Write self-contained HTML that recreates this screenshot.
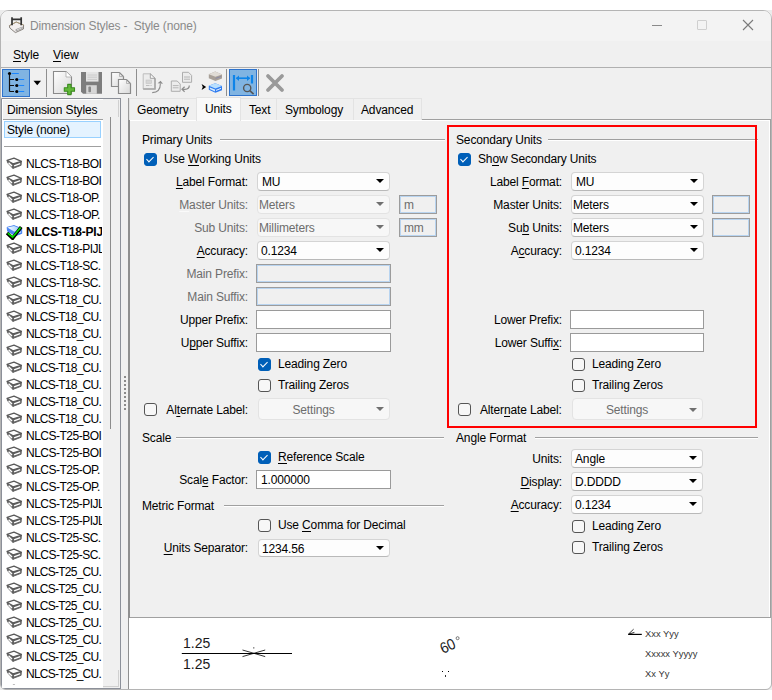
<!DOCTYPE html>
<html><head><meta charset="utf-8">
<style>
*{box-sizing:border-box;margin:0;padding:0}
html,body{width:772px;height:700px;overflow:hidden;background:#fff}
body{position:relative;font:12px "Liberation Sans",sans-serif;color:#000}
.a{position:absolute}
.t{position:absolute;font-size:12px;line-height:14px;white-space:nowrap;letter-spacing:-0.15px}
.r{transform:translateX(-100%)}
.g{color:#6d6d6d}
u{text-decoration:none;border-bottom:1px solid currentColor;display:inline-block;line-height:12px}
.win{position:absolute;left:0;top:10px;width:772px;height:680px;background:#f0f0f0;border:1px solid #b4b4b4;border-radius:9px 9px 6px 6px;overflow:hidden}
.cb{position:absolute;width:133px;height:19px;background:#fdfdfd;border:1px solid #d4d4d4;border-bottom-color:#b9b9b9;border-radius:4px}
.cb.d{background:#f7f7f7;border-color:#e3e3e3}
.cb i{position:absolute;right:5px;top:6px;width:0;height:0;border-left:4px solid transparent;border-right:4px solid transparent;border-top:4px solid #000}
.cb.d i{border-top-color:#707070}
.cb span{position:absolute;left:3px;top:2px;line-height:14px;white-space:nowrap;letter-spacing:-0.15px}
.ed{position:absolute;width:135px;height:19px;background:#fff;border:1px solid #9a9a9a}
.ed.d{background:#f0f0f0;border:1px solid #9c9c9c;box-shadow:inset 0 0 0 1px #b8d4f0}
.sm{position:absolute;width:38px;height:19px;background:#f0f0f0;border:1px solid #9c9c9c;box-shadow:inset 0 0 0 1px #b8d4f0}
.ck{position:absolute;width:13px;height:13px;border:1px solid #555;border-radius:3px;background:#f7f7f7}
.ck.on{background:#005fb8;border-color:#005fb8}
.ck.on:after{content:"";position:absolute;left:3px;top:1px;width:3px;height:6px;border-right:1.3px solid #fff;border-bottom:1.3px solid #fff;transform:rotate(45deg)}
.gl{position:absolute;height:2px;border-top:1px solid #a0a0a0;border-bottom:1px solid #fff}
.li{position:absolute;left:7px;height:17px;width:100px}
.li svg{position:absolute;left:0;top:2px}
.li span{position:absolute;left:19px;top:1px;line-height:14px;white-space:nowrap;letter-spacing:-0.15px}
</style></head><body>
<div class="a" style="left:0;top:10px;width:772px;height:680px;background:#ececec"></div>
<div class="win"></div>

<!-- title bar -->
<div class="a" style="left:1px;top:11px;width:770px;height:30px;background:#f3f3f3;border-radius:7px 7px 0 0"></div>
<div class="t" style="left:30px;top:19px;color:#8a8a8a">Dimension Styles -&nbsp; Style (none)</div>
<div class="a" style="left:652px;top:25px;width:10px;height:1px;background:#8a8a8a"></div>
<div class="a" style="left:697px;top:20px;width:10px;height:10px;border:1px solid #cfcfcf;border-radius:1px"></div>
<svg class="a" style="left:742px;top:19px" width="12" height="12"><path d="M1 1L11 11M11 1L1 11" stroke="#7a7a7a" stroke-width="1.1"/></svg>

<!-- menu -->
<div class="t" style="left:13px;top:48px"><u>S</u>tyle</div>
<div class="t" style="left:53px;top:48px"><u>V</u>iew</div>
<div class="a" style="left:1px;top:67px;width:770px;height:1px;background:#b0b0b0"></div>


<!-- toolbar -->
<div class="a" style="left:2px;top:69px;width:28px;height:28px;background:#80b4e2;border:1px solid #2e73cc"></div>
<svg class="a" style="left:2px;top:69px" width="28" height="28" viewBox="0 0 28 28">
<circle cx="7.5" cy="4.5" r="1.6" fill="#000"/><path d="M9.8 4.5H16.8" stroke="#1a86ff" stroke-width="1"/>
<path d="M7.5 6V22.5M7.5 10.5H12M7.5 16.5H12M7.5 22.5H12" stroke="#111" stroke-width="1.2" fill="none"/>
<circle cx="14.8" cy="10.5" r="1.6" fill="#000"/><circle cx="14.8" cy="16.5" r="1.6" fill="#000"/><circle cx="14.8" cy="22.5" r="1.6" fill="#000"/>
<path d="M16.8 10.5H22.2M16.8 16.5H22.2M16.8 22.5H22.2" stroke="#1a86ff" stroke-width="1"/>
</svg>
<svg class="a" style="left:33px;top:80px" width="9" height="6"><path d="M0.5 0.8H8L4.25 5.2Z" fill="#000"/></svg>
<div class="a" style="left:46px;top:69px;width:1px;height:28px;background:#8e8e8e"></div>
<!-- new -->
<svg class="a" style="left:52px;top:70px" width="24" height="26" viewBox="0 0 24 26">
<defs><linearGradient id="pg" x1="0" y1="0" x2="1" y2="1"><stop offset="0" stop-color="#fff"/><stop offset="1" stop-color="#d8d8d8"/></linearGradient></defs>
<path d="M1.5 1.5H14L19.5 7V23.5H1.5Z" fill="url(#pg)" stroke="#8a8a8a" stroke-width="1.1"/>
<path d="M14 1.5V7H19.5" fill="#fff" stroke="#aaa" stroke-width="0.8"/>
<path d="M15.7 14.4H19.1V17.8H22.5V21.2H19.1V24.6H15.7V21.2H12.3V17.8H15.7Z" fill="#62b83a" stroke="#3c8c20" stroke-width="1.1" stroke-linejoin="round"/>

</svg>
<!-- save -->
<svg class="a" style="left:80px;top:71px" width="24" height="24" viewBox="0 0 24 24">
<path d="M1 1H22V22.8H3L1 20.8Z" fill="#7d7d7d"/>
<rect x="6" y="1" width="12.5" height="9.6" fill="#e4e4e4"/>
<path d="M7.5 4H17M7.5 6.2H17M7.5 8.4H17" stroke="#c4c4c4" stroke-width="0.8"/>
<rect x="6.2" y="14.2" width="10.6" height="8.6" fill="#d6d6d6"/>
<rect x="8.4" y="15.6" width="2.6" height="5.6" rx="0.8" fill="#888"/>
</svg>
<!-- copy -->
<svg class="a" style="left:110px;top:71px" width="22" height="24" viewBox="0 0 22 24">
<path d="M1.5 1.5H9.5L13.5 5.5V15.5H1.5Z" fill="url(#pg)" stroke="#8a8a8a" stroke-width="1.2"/>
<path d="M8.5 8.5H16.5L20.5 12.5V22.5H8.5Z" fill="url(#pg)" stroke="#8a8a8a" stroke-width="1.2"/>
<path d="M9.5 1.5V5.5H13.5M16.5 8.5V12.5H20.5" fill="none" stroke="#aaa" stroke-width="0.8"/>
</svg>
<div class="a" style="left:136px;top:69px;width:1px;height:27px;background:#8e8e8e"></div>
<!-- doc refresh (disabled) -->
<svg class="a" style="left:142px;top:72px" width="22" height="22" viewBox="0 0 22 22">
<path d="M1.2 1.8H8.3L13 6.3V17H1.2Z" fill="#ececec" stroke="#bdbdbd" stroke-width="1"/>
<path d="M1.2 17H13V6.3" fill="none" stroke="#a6a6a6" stroke-width="1.6"/>
<path d="M8.3 1.8L13 6.3H8.3Z" fill="#fafafa" stroke="#9a9a9a" stroke-width="0.9"/>
<rect x="4" y="8" width="5.5" height="3.5" fill="#d6d6d6" stroke="#c4c4c4" stroke-width="0.6"/>
<path d="M4 13.5H7.5M8.5 13.5H9.6" stroke="#b8b8b8" stroke-width="0.9"/>
<path d="M10.2 20.6C15.2 20.6 18.4 18 18.4 11.6" fill="none" stroke="#8d8d8d" stroke-width="1.1"/>
<path d="M15.6 11.2L18.6 8.8L21 11.8Z" fill="#8d8d8d"/>
</svg>
<!-- doc swap (disabled) -->
<svg class="a" style="left:170px;top:71px" width="24" height="22" viewBox="0 0 24 22">
<path d="M12.5 1.3H18.5L21.6 4.4V11.3H12.5Z" fill="#ececec" stroke="#adadad" stroke-width="1"/>
<path d="M14 6H20M14 8.2H20" stroke="#b0b0b0" stroke-width="0.9"/>
<path d="M1.3 10H7.2L10.2 13V20.3H1.3Z" fill="#ececec" stroke="#adadad" stroke-width="1"/>
<path d="M2.8 14.6H8.6M2.8 16.8H8.6" stroke="#b0b0b0" stroke-width="0.9"/>
<path d="M19.3 14.6C19.3 17 18 18.3 15 18.3H13" fill="none" stroke="#8d8d8d" stroke-width="1.2"/>
<path d="M14.6 15.8L12 18.3L14.6 20.8" fill="none" stroke="#8d8d8d" stroke-width="1.2"/>
</svg>
<!-- arrow + stacks -->
<svg class="a" style="left:200px;top:70px" width="24" height="24" viewBox="0 0 24 24">
<path d="M1.6 14L6.2 17L1.6 20L2.8 17Z" fill="#000"/>
<path d="M8.8 4.2L15.2 1.6L22 4.4V8.4L15.4 11L8.8 8.2Z" fill="#a8a098"/>
<path d="M8.8 4.2L15.2 1.6L22 4.4L15.4 6.8Z" fill="#e0dcd6"/>
<path d="M15.6 8.4L21.2 6.4" stroke="#8a8aa8" stroke-width="1"/>
<path d="M8.8 15.8L15.2 13.2L22 16V20.2L15.4 22.8L8.8 19.8Z" fill="#2f7cf0"/>
<path d="M8.8 15.8L15.2 13.2L22 16L15.4 18.4Z" fill="#b9e0ff"/>
<path d="M9.8 17.4L15 19.6V21.4L9.8 19Z" fill="#d6ecff"/>
<path d="M16 20.4L21 18.4" stroke="#fff" stroke-width="0.9"/>
</svg>
<div class="a" style="left:226px;top:69px;width:1px;height:27px;background:#8e8e8e"></div>
<div class="a" style="left:229px;top:69px;width:28px;height:27px;background:#80b4e2;border:1px solid #2e73cc"></div>
<svg class="a" style="left:229px;top:69px" width="28" height="27" viewBox="0 0 28 27">
<path d="M5 6V21.5M23 6V14.5" stroke="#0d84e8" stroke-width="2.2"/>
<path d="M7.5 9.2H20.5" stroke="#0d84e8" stroke-width="1.6"/>
<path d="M6.8 9.2L10 6.4V12Z M21.2 9.2L18 6.4V12Z" fill="#0d84e8"/>
<circle cx="18.2" cy="19" r="3.6" fill="none" stroke="#555" stroke-width="1.4"/>
<path d="M20.8 21.6L24.6 25.2" stroke="#555" stroke-width="1.6"/>
</svg>
<div class="a" style="left:258px;top:69px;width:1px;height:27px;background:#8e8e8e"></div>
<svg class="a" style="left:264px;top:72px" width="22" height="22" viewBox="0 0 22 22">
<path d="M4 4L18 18M18 4L4 18" stroke="#9a9a9a" stroke-width="3.8" stroke-linecap="round"/>
</svg>
<!-- title icon -->
<svg class="a" style="left:7px;top:15px" width="20" height="20" viewBox="0 0 20 20">
<path d="M2.4 10.6L9.2 7L16.6 10L16.4 14L8.4 17.6L2.8 13Z" fill="#f2eeee" stroke="#7a7670" stroke-width="0.9" stroke-linejoin="round"/>
<path d="M2.4 10.6L9.2 7L16.6 10" fill="none" stroke="#b09870" stroke-width="0.8"/>
<path d="M8.6 14.2L15.6 11.4V13.8L8.6 16.6Z" fill="#9a9a9a"/>
<path d="M9.6 15L14.8 12.8" stroke="#eee" stroke-width="0.8"/>
<path d="M5 2.2V10.2M14.2 2.2V10.2M5 4.4H14.2" stroke="#333" stroke-width="1.7"/>
</svg>

<!-- left panel -->
<div class="a" style="left:1px;top:98px;width:120px;height:591px;border:1px solid #8c9099;border-radius:0 0 0 4px;background:#f0f0f0"></div>
<div class="a" style="left:2px;top:99px;width:101px;height:589px;background:#fff"></div>
<div class="a" style="left:3px;top:100px;width:100px;height:20px;background:#f0f0f0;border-bottom:1px solid #a0a0a0"></div>
<div class="t" style="left:7px;top:103px">Dimension Styles</div>
<div class="a" style="left:4px;top:121px;width:97px;height:17px;background:#e5f3ff;border:1px solid #99d1ff"></div>
<div class="t" style="left:7px;top:123px">Style (none)</div>
<div class="a" style="left:4px;top:146px;width:97px;height:1px;background:#a0a0a0"></div>

<div class="a" style="left:2px;top:147px;width:100px;height:538px;overflow:hidden"><div class="a" style="left:-2px;top:-147px;width:772px;height:900px"><div class="a" style="left:5px;top:157px"><svg width="18" height="14" viewBox="0 0 18 14"><path d="M2.1 3.4L8.1 6.8L7.9 11.4L2.6 5.8ZM8.1 6.8L16.4 4.4L16.1 8.3L7.9 11.4Z" fill="#626262" stroke="#626262" stroke-width="0.9" stroke-linejoin="round"/><path d="M2.1 3.4L9 1.1L16.4 4.4L8.1 6.8Z" fill="#fff" stroke="#5a5a5a" stroke-width="1.2" stroke-linejoin="round"/><path d="M3.6 5.8L7.0 9.0M9.1 8.8L15.2 6.6" stroke="#fff" stroke-width="1.4"/></svg></div><div class="t" style="left:26px;top:157px;letter-spacing:-0.5px">NLCS-T18-BOI</div><div class="a" style="left:5px;top:174px"><svg width="18" height="14" viewBox="0 0 18 14"><path d="M2.1 3.4L8.1 6.8L7.9 11.4L2.6 5.8ZM8.1 6.8L16.4 4.4L16.1 8.3L7.9 11.4Z" fill="#626262" stroke="#626262" stroke-width="0.9" stroke-linejoin="round"/><path d="M2.1 3.4L9 1.1L16.4 4.4L8.1 6.8Z" fill="#fff" stroke="#5a5a5a" stroke-width="1.2" stroke-linejoin="round"/><path d="M3.6 5.8L7.0 9.0M9.1 8.8L15.2 6.6" stroke="#fff" stroke-width="1.4"/></svg></div><div class="t" style="left:26px;top:174px;letter-spacing:-0.5px">NLCS-T18-BOI</div><div class="a" style="left:5px;top:191px"><svg width="18" height="14" viewBox="0 0 18 14"><path d="M2.1 3.4L8.1 6.8L7.9 11.4L2.6 5.8ZM8.1 6.8L16.4 4.4L16.1 8.3L7.9 11.4Z" fill="#626262" stroke="#626262" stroke-width="0.9" stroke-linejoin="round"/><path d="M2.1 3.4L9 1.1L16.4 4.4L8.1 6.8Z" fill="#fff" stroke="#5a5a5a" stroke-width="1.2" stroke-linejoin="round"/><path d="M3.6 5.8L7.0 9.0M9.1 8.8L15.2 6.6" stroke="#fff" stroke-width="1.4"/></svg></div><div class="t" style="left:26px;top:191px;letter-spacing:-0.5px">NLCS-T18-OP.</div><div class="a" style="left:5px;top:208px"><svg width="18" height="14" viewBox="0 0 18 14"><path d="M2.1 3.4L8.1 6.8L7.9 11.4L2.6 5.8ZM8.1 6.8L16.4 4.4L16.1 8.3L7.9 11.4Z" fill="#626262" stroke="#626262" stroke-width="0.9" stroke-linejoin="round"/><path d="M2.1 3.4L9 1.1L16.4 4.4L8.1 6.8Z" fill="#fff" stroke="#5a5a5a" stroke-width="1.2" stroke-linejoin="round"/><path d="M3.6 5.8L7.0 9.0M9.1 8.8L15.2 6.6" stroke="#fff" stroke-width="1.4"/></svg></div><div class="t" style="left:26px;top:208px;letter-spacing:-0.5px">NLCS-T18-OP.</div><div class="a" style="left:5px;top:224px"><svg width="18" height="16" viewBox="0 0 18 16"><defs><linearGradient id="bg1" x1="0" y1="0" x2="1" y2="0"><stop offset="0" stop-color="#fff"/><stop offset="1" stop-color="#8cc8ff"/></linearGradient></defs><path d="M2.1 3.3L9 1.6L16.6 4.6L16.8 9.4L10.5 11.8L2.6 7.2Z" fill="#4a86f6" stroke="#3a78f0" stroke-width="0.8" stroke-linejoin="round"/><path d="M2.4 3.4L9 1.9L16.2 4.7L9.4 7.8Z" fill="url(#bg1)"/><path d="M10.8 9.9L16 7.9" stroke="#e8f4ff" stroke-width="1"/><path d="M2 9L7.6 14.3L16.2 3" fill="none" stroke="#000" stroke-width="3.4" stroke-linejoin="miter"/><path d="M2.8 9.2L7.6 13.2L15.6 3.4" fill="none" stroke="#00e000" stroke-width="1.6"/></svg></div><div class="t" style="left:26px;top:225px;font-weight:bold;letter-spacing:-0.2px">NLCS-T18-PIJ</div><div class="a" style="left:5px;top:242px"><svg width="18" height="14" viewBox="0 0 18 14"><path d="M2.1 3.4L8.1 6.8L7.9 11.4L2.6 5.8ZM8.1 6.8L16.4 4.4L16.1 8.3L7.9 11.4Z" fill="#626262" stroke="#626262" stroke-width="0.9" stroke-linejoin="round"/><path d="M2.1 3.4L9 1.1L16.4 4.4L8.1 6.8Z" fill="#fff" stroke="#5a5a5a" stroke-width="1.2" stroke-linejoin="round"/><path d="M3.6 5.8L7.0 9.0M9.1 8.8L15.2 6.6" stroke="#fff" stroke-width="1.4"/></svg></div><div class="t" style="left:26px;top:242px;letter-spacing:-0.5px">NLCS-T18-PIJL</div><div class="a" style="left:5px;top:259px"><svg width="18" height="14" viewBox="0 0 18 14"><path d="M2.1 3.4L8.1 6.8L7.9 11.4L2.6 5.8ZM8.1 6.8L16.4 4.4L16.1 8.3L7.9 11.4Z" fill="#626262" stroke="#626262" stroke-width="0.9" stroke-linejoin="round"/><path d="M2.1 3.4L9 1.1L16.4 4.4L8.1 6.8Z" fill="#fff" stroke="#5a5a5a" stroke-width="1.2" stroke-linejoin="round"/><path d="M3.6 5.8L7.0 9.0M9.1 8.8L15.2 6.6" stroke="#fff" stroke-width="1.4"/></svg></div><div class="t" style="left:26px;top:259px;letter-spacing:-0.5px">NLCS-T18-SC.</div><div class="a" style="left:5px;top:276px"><svg width="18" height="14" viewBox="0 0 18 14"><path d="M2.1 3.4L8.1 6.8L7.9 11.4L2.6 5.8ZM8.1 6.8L16.4 4.4L16.1 8.3L7.9 11.4Z" fill="#626262" stroke="#626262" stroke-width="0.9" stroke-linejoin="round"/><path d="M2.1 3.4L9 1.1L16.4 4.4L8.1 6.8Z" fill="#fff" stroke="#5a5a5a" stroke-width="1.2" stroke-linejoin="round"/><path d="M3.6 5.8L7.0 9.0M9.1 8.8L15.2 6.6" stroke="#fff" stroke-width="1.4"/></svg></div><div class="t" style="left:26px;top:276px;letter-spacing:-0.5px">NLCS-T18-SC.</div><div class="a" style="left:5px;top:293px"><svg width="18" height="14" viewBox="0 0 18 14"><path d="M2.1 3.4L8.1 6.8L7.9 11.4L2.6 5.8ZM8.1 6.8L16.4 4.4L16.1 8.3L7.9 11.4Z" fill="#626262" stroke="#626262" stroke-width="0.9" stroke-linejoin="round"/><path d="M2.1 3.4L9 1.1L16.4 4.4L8.1 6.8Z" fill="#fff" stroke="#5a5a5a" stroke-width="1.2" stroke-linejoin="round"/><path d="M3.6 5.8L7.0 9.0M9.1 8.8L15.2 6.6" stroke="#fff" stroke-width="1.4"/></svg></div><div class="t" style="left:26px;top:293px;letter-spacing:-0.75px">NLCS-T18_CU.</div><div class="a" style="left:5px;top:310px"><svg width="18" height="14" viewBox="0 0 18 14"><path d="M2.1 3.4L8.1 6.8L7.9 11.4L2.6 5.8ZM8.1 6.8L16.4 4.4L16.1 8.3L7.9 11.4Z" fill="#626262" stroke="#626262" stroke-width="0.9" stroke-linejoin="round"/><path d="M2.1 3.4L9 1.1L16.4 4.4L8.1 6.8Z" fill="#fff" stroke="#5a5a5a" stroke-width="1.2" stroke-linejoin="round"/><path d="M3.6 5.8L7.0 9.0M9.1 8.8L15.2 6.6" stroke="#fff" stroke-width="1.4"/></svg></div><div class="t" style="left:26px;top:310px;letter-spacing:-0.75px">NLCS-T18_CU.</div><div class="a" style="left:5px;top:327px"><svg width="18" height="14" viewBox="0 0 18 14"><path d="M2.1 3.4L8.1 6.8L7.9 11.4L2.6 5.8ZM8.1 6.8L16.4 4.4L16.1 8.3L7.9 11.4Z" fill="#626262" stroke="#626262" stroke-width="0.9" stroke-linejoin="round"/><path d="M2.1 3.4L9 1.1L16.4 4.4L8.1 6.8Z" fill="#fff" stroke="#5a5a5a" stroke-width="1.2" stroke-linejoin="round"/><path d="M3.6 5.8L7.0 9.0M9.1 8.8L15.2 6.6" stroke="#fff" stroke-width="1.4"/></svg></div><div class="t" style="left:26px;top:327px;letter-spacing:-0.75px">NLCS-T18_CU.</div><div class="a" style="left:5px;top:344px"><svg width="18" height="14" viewBox="0 0 18 14"><path d="M2.1 3.4L8.1 6.8L7.9 11.4L2.6 5.8ZM8.1 6.8L16.4 4.4L16.1 8.3L7.9 11.4Z" fill="#626262" stroke="#626262" stroke-width="0.9" stroke-linejoin="round"/><path d="M2.1 3.4L9 1.1L16.4 4.4L8.1 6.8Z" fill="#fff" stroke="#5a5a5a" stroke-width="1.2" stroke-linejoin="round"/><path d="M3.6 5.8L7.0 9.0M9.1 8.8L15.2 6.6" stroke="#fff" stroke-width="1.4"/></svg></div><div class="t" style="left:26px;top:344px;letter-spacing:-0.75px">NLCS-T18_CU.</div><div class="a" style="left:5px;top:361px"><svg width="18" height="14" viewBox="0 0 18 14"><path d="M2.1 3.4L8.1 6.8L7.9 11.4L2.6 5.8ZM8.1 6.8L16.4 4.4L16.1 8.3L7.9 11.4Z" fill="#626262" stroke="#626262" stroke-width="0.9" stroke-linejoin="round"/><path d="M2.1 3.4L9 1.1L16.4 4.4L8.1 6.8Z" fill="#fff" stroke="#5a5a5a" stroke-width="1.2" stroke-linejoin="round"/><path d="M3.6 5.8L7.0 9.0M9.1 8.8L15.2 6.6" stroke="#fff" stroke-width="1.4"/></svg></div><div class="t" style="left:26px;top:361px;letter-spacing:-0.75px">NLCS-T18_CU.</div><div class="a" style="left:5px;top:378px"><svg width="18" height="14" viewBox="0 0 18 14"><path d="M2.1 3.4L8.1 6.8L7.9 11.4L2.6 5.8ZM8.1 6.8L16.4 4.4L16.1 8.3L7.9 11.4Z" fill="#626262" stroke="#626262" stroke-width="0.9" stroke-linejoin="round"/><path d="M2.1 3.4L9 1.1L16.4 4.4L8.1 6.8Z" fill="#fff" stroke="#5a5a5a" stroke-width="1.2" stroke-linejoin="round"/><path d="M3.6 5.8L7.0 9.0M9.1 8.8L15.2 6.6" stroke="#fff" stroke-width="1.4"/></svg></div><div class="t" style="left:26px;top:378px;letter-spacing:-0.75px">NLCS-T18_CU.</div><div class="a" style="left:5px;top:395px"><svg width="18" height="14" viewBox="0 0 18 14"><path d="M2.1 3.4L8.1 6.8L7.9 11.4L2.6 5.8ZM8.1 6.8L16.4 4.4L16.1 8.3L7.9 11.4Z" fill="#626262" stroke="#626262" stroke-width="0.9" stroke-linejoin="round"/><path d="M2.1 3.4L9 1.1L16.4 4.4L8.1 6.8Z" fill="#fff" stroke="#5a5a5a" stroke-width="1.2" stroke-linejoin="round"/><path d="M3.6 5.8L7.0 9.0M9.1 8.8L15.2 6.6" stroke="#fff" stroke-width="1.4"/></svg></div><div class="t" style="left:26px;top:395px;letter-spacing:-0.75px">NLCS-T18_CU.</div><div class="a" style="left:5px;top:412px"><svg width="18" height="14" viewBox="0 0 18 14"><path d="M2.1 3.4L8.1 6.8L7.9 11.4L2.6 5.8ZM8.1 6.8L16.4 4.4L16.1 8.3L7.9 11.4Z" fill="#626262" stroke="#626262" stroke-width="0.9" stroke-linejoin="round"/><path d="M2.1 3.4L9 1.1L16.4 4.4L8.1 6.8Z" fill="#fff" stroke="#5a5a5a" stroke-width="1.2" stroke-linejoin="round"/><path d="M3.6 5.8L7.0 9.0M9.1 8.8L15.2 6.6" stroke="#fff" stroke-width="1.4"/></svg></div><div class="t" style="left:26px;top:412px;letter-spacing:-0.75px">NLCS-T18_CU.</div><div class="a" style="left:5px;top:429px"><svg width="18" height="14" viewBox="0 0 18 14"><path d="M2.1 3.4L8.1 6.8L7.9 11.4L2.6 5.8ZM8.1 6.8L16.4 4.4L16.1 8.3L7.9 11.4Z" fill="#626262" stroke="#626262" stroke-width="0.9" stroke-linejoin="round"/><path d="M2.1 3.4L9 1.1L16.4 4.4L8.1 6.8Z" fill="#fff" stroke="#5a5a5a" stroke-width="1.2" stroke-linejoin="round"/><path d="M3.6 5.8L7.0 9.0M9.1 8.8L15.2 6.6" stroke="#fff" stroke-width="1.4"/></svg></div><div class="t" style="left:26px;top:429px;letter-spacing:-0.5px">NLCS-T25-BOI</div><div class="a" style="left:5px;top:446px"><svg width="18" height="14" viewBox="0 0 18 14"><path d="M2.1 3.4L8.1 6.8L7.9 11.4L2.6 5.8ZM8.1 6.8L16.4 4.4L16.1 8.3L7.9 11.4Z" fill="#626262" stroke="#626262" stroke-width="0.9" stroke-linejoin="round"/><path d="M2.1 3.4L9 1.1L16.4 4.4L8.1 6.8Z" fill="#fff" stroke="#5a5a5a" stroke-width="1.2" stroke-linejoin="round"/><path d="M3.6 5.8L7.0 9.0M9.1 8.8L15.2 6.6" stroke="#fff" stroke-width="1.4"/></svg></div><div class="t" style="left:26px;top:446px;letter-spacing:-0.5px">NLCS-T25-BOI</div><div class="a" style="left:5px;top:463px"><svg width="18" height="14" viewBox="0 0 18 14"><path d="M2.1 3.4L8.1 6.8L7.9 11.4L2.6 5.8ZM8.1 6.8L16.4 4.4L16.1 8.3L7.9 11.4Z" fill="#626262" stroke="#626262" stroke-width="0.9" stroke-linejoin="round"/><path d="M2.1 3.4L9 1.1L16.4 4.4L8.1 6.8Z" fill="#fff" stroke="#5a5a5a" stroke-width="1.2" stroke-linejoin="round"/><path d="M3.6 5.8L7.0 9.0M9.1 8.8L15.2 6.6" stroke="#fff" stroke-width="1.4"/></svg></div><div class="t" style="left:26px;top:463px;letter-spacing:-0.5px">NLCS-T25-OP.</div><div class="a" style="left:5px;top:480px"><svg width="18" height="14" viewBox="0 0 18 14"><path d="M2.1 3.4L8.1 6.8L7.9 11.4L2.6 5.8ZM8.1 6.8L16.4 4.4L16.1 8.3L7.9 11.4Z" fill="#626262" stroke="#626262" stroke-width="0.9" stroke-linejoin="round"/><path d="M2.1 3.4L9 1.1L16.4 4.4L8.1 6.8Z" fill="#fff" stroke="#5a5a5a" stroke-width="1.2" stroke-linejoin="round"/><path d="M3.6 5.8L7.0 9.0M9.1 8.8L15.2 6.6" stroke="#fff" stroke-width="1.4"/></svg></div><div class="t" style="left:26px;top:480px;letter-spacing:-0.5px">NLCS-T25-OP.</div><div class="a" style="left:5px;top:497px"><svg width="18" height="14" viewBox="0 0 18 14"><path d="M2.1 3.4L8.1 6.8L7.9 11.4L2.6 5.8ZM8.1 6.8L16.4 4.4L16.1 8.3L7.9 11.4Z" fill="#626262" stroke="#626262" stroke-width="0.9" stroke-linejoin="round"/><path d="M2.1 3.4L9 1.1L16.4 4.4L8.1 6.8Z" fill="#fff" stroke="#5a5a5a" stroke-width="1.2" stroke-linejoin="round"/><path d="M3.6 5.8L7.0 9.0M9.1 8.8L15.2 6.6" stroke="#fff" stroke-width="1.4"/></svg></div><div class="t" style="left:26px;top:497px;letter-spacing:-0.5px">NLCS-T25-PIJL</div><div class="a" style="left:5px;top:514px"><svg width="18" height="14" viewBox="0 0 18 14"><path d="M2.1 3.4L8.1 6.8L7.9 11.4L2.6 5.8ZM8.1 6.8L16.4 4.4L16.1 8.3L7.9 11.4Z" fill="#626262" stroke="#626262" stroke-width="0.9" stroke-linejoin="round"/><path d="M2.1 3.4L9 1.1L16.4 4.4L8.1 6.8Z" fill="#fff" stroke="#5a5a5a" stroke-width="1.2" stroke-linejoin="round"/><path d="M3.6 5.8L7.0 9.0M9.1 8.8L15.2 6.6" stroke="#fff" stroke-width="1.4"/></svg></div><div class="t" style="left:26px;top:514px;letter-spacing:-0.5px">NLCS-T25-PIJL</div><div class="a" style="left:5px;top:531px"><svg width="18" height="14" viewBox="0 0 18 14"><path d="M2.1 3.4L8.1 6.8L7.9 11.4L2.6 5.8ZM8.1 6.8L16.4 4.4L16.1 8.3L7.9 11.4Z" fill="#626262" stroke="#626262" stroke-width="0.9" stroke-linejoin="round"/><path d="M2.1 3.4L9 1.1L16.4 4.4L8.1 6.8Z" fill="#fff" stroke="#5a5a5a" stroke-width="1.2" stroke-linejoin="round"/><path d="M3.6 5.8L7.0 9.0M9.1 8.8L15.2 6.6" stroke="#fff" stroke-width="1.4"/></svg></div><div class="t" style="left:26px;top:531px;letter-spacing:-0.5px">NLCS-T25-SC.</div><div class="a" style="left:5px;top:548px"><svg width="18" height="14" viewBox="0 0 18 14"><path d="M2.1 3.4L8.1 6.8L7.9 11.4L2.6 5.8ZM8.1 6.8L16.4 4.4L16.1 8.3L7.9 11.4Z" fill="#626262" stroke="#626262" stroke-width="0.9" stroke-linejoin="round"/><path d="M2.1 3.4L9 1.1L16.4 4.4L8.1 6.8Z" fill="#fff" stroke="#5a5a5a" stroke-width="1.2" stroke-linejoin="round"/><path d="M3.6 5.8L7.0 9.0M9.1 8.8L15.2 6.6" stroke="#fff" stroke-width="1.4"/></svg></div><div class="t" style="left:26px;top:548px;letter-spacing:-0.5px">NLCS-T25-SC.</div><div class="a" style="left:5px;top:565px"><svg width="18" height="14" viewBox="0 0 18 14"><path d="M2.1 3.4L8.1 6.8L7.9 11.4L2.6 5.8ZM8.1 6.8L16.4 4.4L16.1 8.3L7.9 11.4Z" fill="#626262" stroke="#626262" stroke-width="0.9" stroke-linejoin="round"/><path d="M2.1 3.4L9 1.1L16.4 4.4L8.1 6.8Z" fill="#fff" stroke="#5a5a5a" stroke-width="1.2" stroke-linejoin="round"/><path d="M3.6 5.8L7.0 9.0M9.1 8.8L15.2 6.6" stroke="#fff" stroke-width="1.4"/></svg></div><div class="t" style="left:26px;top:565px;letter-spacing:-0.75px">NLCS-T25_CU.</div><div class="a" style="left:5px;top:582px"><svg width="18" height="14" viewBox="0 0 18 14"><path d="M2.1 3.4L8.1 6.8L7.9 11.4L2.6 5.8ZM8.1 6.8L16.4 4.4L16.1 8.3L7.9 11.4Z" fill="#626262" stroke="#626262" stroke-width="0.9" stroke-linejoin="round"/><path d="M2.1 3.4L9 1.1L16.4 4.4L8.1 6.8Z" fill="#fff" stroke="#5a5a5a" stroke-width="1.2" stroke-linejoin="round"/><path d="M3.6 5.8L7.0 9.0M9.1 8.8L15.2 6.6" stroke="#fff" stroke-width="1.4"/></svg></div><div class="t" style="left:26px;top:582px;letter-spacing:-0.75px">NLCS-T25_CU.</div><div class="a" style="left:5px;top:599px"><svg width="18" height="14" viewBox="0 0 18 14"><path d="M2.1 3.4L8.1 6.8L7.9 11.4L2.6 5.8ZM8.1 6.8L16.4 4.4L16.1 8.3L7.9 11.4Z" fill="#626262" stroke="#626262" stroke-width="0.9" stroke-linejoin="round"/><path d="M2.1 3.4L9 1.1L16.4 4.4L8.1 6.8Z" fill="#fff" stroke="#5a5a5a" stroke-width="1.2" stroke-linejoin="round"/><path d="M3.6 5.8L7.0 9.0M9.1 8.8L15.2 6.6" stroke="#fff" stroke-width="1.4"/></svg></div><div class="t" style="left:26px;top:599px;letter-spacing:-0.75px">NLCS-T25_CU.</div><div class="a" style="left:5px;top:616px"><svg width="18" height="14" viewBox="0 0 18 14"><path d="M2.1 3.4L8.1 6.8L7.9 11.4L2.6 5.8ZM8.1 6.8L16.4 4.4L16.1 8.3L7.9 11.4Z" fill="#626262" stroke="#626262" stroke-width="0.9" stroke-linejoin="round"/><path d="M2.1 3.4L9 1.1L16.4 4.4L8.1 6.8Z" fill="#fff" stroke="#5a5a5a" stroke-width="1.2" stroke-linejoin="round"/><path d="M3.6 5.8L7.0 9.0M9.1 8.8L15.2 6.6" stroke="#fff" stroke-width="1.4"/></svg></div><div class="t" style="left:26px;top:616px;letter-spacing:-0.75px">NLCS-T25_CU.</div><div class="a" style="left:5px;top:633px"><svg width="18" height="14" viewBox="0 0 18 14"><path d="M2.1 3.4L8.1 6.8L7.9 11.4L2.6 5.8ZM8.1 6.8L16.4 4.4L16.1 8.3L7.9 11.4Z" fill="#626262" stroke="#626262" stroke-width="0.9" stroke-linejoin="round"/><path d="M2.1 3.4L9 1.1L16.4 4.4L8.1 6.8Z" fill="#fff" stroke="#5a5a5a" stroke-width="1.2" stroke-linejoin="round"/><path d="M3.6 5.8L7.0 9.0M9.1 8.8L15.2 6.6" stroke="#fff" stroke-width="1.4"/></svg></div><div class="t" style="left:26px;top:633px;letter-spacing:-0.75px">NLCS-T25_CU.</div><div class="a" style="left:5px;top:650px"><svg width="18" height="14" viewBox="0 0 18 14"><path d="M2.1 3.4L8.1 6.8L7.9 11.4L2.6 5.8ZM8.1 6.8L16.4 4.4L16.1 8.3L7.9 11.4Z" fill="#626262" stroke="#626262" stroke-width="0.9" stroke-linejoin="round"/><path d="M2.1 3.4L9 1.1L16.4 4.4L8.1 6.8Z" fill="#fff" stroke="#5a5a5a" stroke-width="1.2" stroke-linejoin="round"/><path d="M3.6 5.8L7.0 9.0M9.1 8.8L15.2 6.6" stroke="#fff" stroke-width="1.4"/></svg></div><div class="t" style="left:26px;top:650px;letter-spacing:-0.75px">NLCS-T25_CU.</div><div class="a" style="left:5px;top:667px"><svg width="18" height="14" viewBox="0 0 18 14"><path d="M2.1 3.4L8.1 6.8L7.9 11.4L2.6 5.8ZM8.1 6.8L16.4 4.4L16.1 8.3L7.9 11.4Z" fill="#626262" stroke="#626262" stroke-width="0.9" stroke-linejoin="round"/><path d="M2.1 3.4L9 1.1L16.4 4.4L8.1 6.8Z" fill="#fff" stroke="#5a5a5a" stroke-width="1.2" stroke-linejoin="round"/><path d="M3.6 5.8L7.0 9.0M9.1 8.8L15.2 6.6" stroke="#fff" stroke-width="1.4"/></svg></div><div class="t" style="left:26px;top:667px;letter-spacing:-0.75px">NLCS-T25_CU.</div><div class="a" style="left:5px;top:684px"><svg width="18" height="14" viewBox="0 0 18 14"><path d="M2.1 3.4L8.1 6.8L7.9 11.4L2.6 5.8ZM8.1 6.8L16.4 4.4L16.1 8.3L7.9 11.4Z" fill="#626262" stroke="#626262" stroke-width="0.9" stroke-linejoin="round"/><path d="M2.1 3.4L9 1.1L16.4 4.4L8.1 6.8Z" fill="#fff" stroke="#5a5a5a" stroke-width="1.2" stroke-linejoin="round"/><path d="M3.6 5.8L7.0 9.0M9.1 8.8L15.2 6.6" stroke="#fff" stroke-width="1.4"/></svg></div><div class="t" style="left:26px;top:684px;letter-spacing:-0.75px">NLCS-T25_CU.</div></div></div>
<!-- tabs / right side -->

<!-- splitter -->
<div class="a" style="left:110px;top:117px;width:1px;height:312px;background:#8c8c8c"></div>
<div class="a" style="left:118px;top:100px;width:1px;height:17px;background:#d0d0d0"></div>
<div class="a" style="left:120px;top:98px;width:1px;height:591px;background:#8c9099"></div>
<div class="a" style="left:103px;top:686px;width:16px;height:1px;background:#d0d0d0"></div>
<div class="a" style="left:118px;top:670px;width:1px;height:17px;background:#d0d0d0"></div>

<!-- tab control -->
<div class="a" style="left:128px;top:119px;width:643px;height:499px;border-left:2px solid #8f8f8f;border-top:1px solid #a0a0a0;border-right:1px solid #a0a0a0"></div>
<div class="a" style="left:130px;top:120px;width:640px;height:497px;border-top:1px solid #fff;border-right:1px solid #fff"></div>
<div class="a" style="left:128px;top:98px;width:1px;height:22px;background:#9a9a9a"></div>
<div class="a" style="left:128px;top:617px;width:2px;height:72px;background:#8f8f8f"></div>
<div class="a" style="left:129px;top:98px;width:68px;height:22px;border:1px solid #e3e3e3;border-bottom:none;background:#f0f0f0"></div>
<div class="a" style="left:196px;top:97px;width:45px;height:24px;border:1px solid #e3e3e3;border-bottom:none;background:#f9f9f9"></div>
<div class="a" style="left:240px;top:98px;width:37px;height:22px;border:1px solid #e3e3e3;border-bottom:none;background:#f0f0f0"></div>
<div class="a" style="left:276px;top:98px;width:78px;height:22px;border:1px solid #e3e3e3;border-bottom:none;background:#f0f0f0"></div>
<div class="a" style="left:353px;top:98px;width:69px;height:22px;border:1px solid #e3e3e3;border-bottom:none;background:#f0f0f0"></div>
<div class="t" style="left:137px;top:103px">Geometry</div>
<div class="t" style="left:205px;top:102px">Units</div>
<div class="t" style="left:249px;top:103px">Text</div>
<div class="t" style="left:285px;top:103px">Symbology</div>
<div class="t" style="left:361px;top:103px">Advanced</div>

<!-- Primary Units -->
<div class="t" style="left:142px;top:133px">Primary Units</div>
<div class="gl" style="left:220px;top:139px;width:225px"></div>
<div class="ck on" style="left:144px;top:153px"></div>
<div class="t" style="left:164px;top:152px">Use <u>W</u>orking Units</div>

<div class="t r" style="left:248px;top:175px"><u>L</u>abel Format:</div>
<div class="cb" style="left:257px;top:172px"><span style="left:4px">MU</span><i></i></div>
<div class="t r g" style="left:248px;top:198px"><u style="border-color:#fafafa">M</u>aster Units:</div>
<div class="cb d" style="left:257px;top:195px"><span class="g" style="left:1px">Meters</span><i></i></div>
<div class="sm" style="left:399px;top:195px"></div>
<div class="t g" style="left:404px;top:198px">m</div>
<div class="t r g" style="left:248px;top:221px">Sub Units:</div>
<div class="cb d" style="left:257px;top:218px"><span class="g" style="left:1px">Millimeters</span><i></i></div>
<div class="sm" style="left:399px;top:218px"></div>
<div class="t g" style="left:404px;top:221px">mm</div>
<div class="t r" style="left:248px;top:244px"><u>A</u>ccuracy:</div>
<div class="cb" style="left:257px;top:241px"><span>0.1234</span><i></i></div>
<div class="t r g" style="left:248px;top:267px">Main Prefix:</div>
<div class="ed d" style="left:256px;top:264px"></div>
<div class="t r g" style="left:248px;top:290px">Main Suffix:</div>
<div class="ed d" style="left:256px;top:287px"></div>
<div class="t r" style="left:248px;top:313px">Upper Prefix:</div>
<div class="ed" style="left:256px;top:310px"></div>
<div class="t r" style="left:248px;top:336px">U<u>p</u>per Suffix:</div>
<div class="ed" style="left:256px;top:333px"></div>
<div class="ck on" style="left:258px;top:358px"></div>
<div class="t" style="left:278px;top:357px">Leading Zero</div>
<div class="ck" style="left:258px;top:379px"></div>
<div class="t" style="left:278px;top:378px">Trailing Zeros</div>
<div class="ck" style="left:144px;top:403px"></div>
<div class="t r" style="left:248px;top:403px">Al<u>t</u>ernate Label:</div>
<div class="cb d" style="left:258px;top:398px;height:22px;width:132px"><span class="g" style="left:0;width:100%;text-align:center;top:4px;padding-right:21px">Settings</span><i style="top:8px"></i></div>

<!-- Secondary Units -->
<div class="t" style="left:456px;top:133px">Secondary Units</div>
<div class="gl" style="left:548px;top:139px;width:210px"></div>
<div class="ck on" style="left:458px;top:153px"></div>
<div class="t" style="left:478px;top:152px">Sh<u>o</u>w Secondary Units</div>
<div class="t r" style="left:562px;top:175px">Label <u>F</u>ormat:</div>
<div class="cb" style="left:571px;top:172px"><span style="left:4px">MU</span><i></i></div>
<div class="t r" style="left:562px;top:198px">Master Units:</div>
<div class="cb" style="left:571px;top:195px"><span style="left:1px">Meters</span><i></i></div>
<div class="sm" style="left:712px;top:195px"></div>
<div class="t r" style="left:562px;top:221px">Su<u>b</u> Units:</div>
<div class="cb" style="left:571px;top:218px"><span style="left:1px">Meters</span><i></i></div>
<div class="sm" style="left:712px;top:218px"></div>
<div class="t r" style="left:562px;top:244px">A<u>c</u>curacy:</div>
<div class="cb" style="left:571px;top:241px"><span>0.1234</span><i></i></div>
<div class="t r" style="left:562px;top:313px">Lower Prefix:</div>
<div class="ed" style="left:570px;top:310px;width:134px"></div>
<div class="t r" style="left:562px;top:336px">Lower Suffi<u>x</u>:</div>
<div class="ed" style="left:570px;top:333px;width:134px"></div>
<div class="ck" style="left:572px;top:358px"></div>
<div class="t" style="left:592px;top:357px">Leading Zero</div>
<div class="ck" style="left:572px;top:379px"></div>
<div class="t" style="left:592px;top:378px">Trailing Zeros</div>
<div class="ck" style="left:458px;top:403px"></div>
<div class="t" style="left:480px;top:403px">Alter<u>n</u>ate Label:</div>
<div class="cb d" style="left:572px;top:398px;height:22px;width:131px"><span class="g" style="left:0;width:100%;text-align:center;top:4px;padding-right:21px">Settings</span><i style="top:9px"></i></div>

<div class="a" style="left:447px;top:125px;width:310px;height:303px;border:2px solid #f00"></div>

<!-- Scale -->
<div class="t" style="left:142px;top:431px">Scale</div>
<div class="gl" style="left:176px;top:437px;width:268px"></div>
<div class="ck on" style="left:258px;top:451px"></div>
<div class="t" style="left:278px;top:450px"><u>R</u>eference Scale</div>
<div class="t r" style="left:248px;top:473px">Scal<u>e</u> Factor:</div>
<div class="ed" style="left:256px;top:470px;height:19px"><span class="t" style="left:4px;top:2px">1.000000</span></div>
<!-- Metric -->
<div class="t" style="left:142px;top:499px">Metric Format</div>
<div class="gl" style="left:224px;top:505px;width:220px"></div>
<div class="ck" style="left:258px;top:519px"></div>
<div class="t" style="left:278px;top:518px">Use <u>C</u>omma for Decimal</div>
<div class="t r" style="left:248px;top:541px"><u>U</u>nits Separator:</div>
<div class="cb" style="left:258px;top:539px;height:18px;width:132px"><span>1234.56</span><i></i></div>

<!-- Angle -->
<div class="t" style="left:456px;top:431px">Angle Format</div>
<div class="gl" style="left:535px;top:437px;width:223px"></div>
<div class="t r" style="left:562px;top:452px">Units:</div>
<div class="cb" style="left:571px;top:449px;height:19px;width:132px"><span>Angle</span><i></i></div>
<div class="t r" style="left:562px;top:475px"><u>D</u>isplay:</div>
<div class="cb" style="left:571px;top:472px;height:19px;width:132px"><span>D.DDDD</span><i></i></div>
<div class="t r" style="left:562px;top:498px"><u>A</u>ccuracy:</div>
<div class="cb" style="left:571px;top:495px;height:19px;width:132px"><span>0.1234</span><i></i></div>
<div class="ck" style="left:572px;top:520px"></div>
<div class="t" style="left:592px;top:519px">Leading Zero</div>
<div class="ck" style="left:572px;top:541px"></div>
<div class="t" style="left:592px;top:540px">Trailing Zeros</div>

<!-- preview -->
<div class="a" style="left:129px;top:618px;width:642px;height:71px;background:#fff;border-radius:0 0 6px 0"></div>


<div class="a" style="left:124px;top:376px;width:2px;height:2px;background:#8a8a8a"></div><div class="a" style="left:124px;top:380px;width:2px;height:2px;background:#8a8a8a"></div><div class="a" style="left:124px;top:384px;width:2px;height:2px;background:#8a8a8a"></div><div class="a" style="left:124px;top:388px;width:2px;height:2px;background:#8a8a8a"></div><div class="a" style="left:124px;top:392px;width:2px;height:2px;background:#8a8a8a"></div><div class="a" style="left:124px;top:396px;width:2px;height:2px;background:#8a8a8a"></div><div class="a" style="left:124px;top:400px;width:2px;height:2px;background:#8a8a8a"></div><div class="a" style="left:124px;top:404px;width:2px;height:2px;background:#8a8a8a"></div><div class="a" style="left:124px;top:408px;width:2px;height:2px;background:#8a8a8a"></div>
<div class="a" style="left:130px;top:617px;width:641px;height:1px;background:#a0a0a0"></div>
<svg class="a" style="left:130px;top:618px" width="641" height="71" viewBox="130 618 641 71" font-family="Liberation Sans">
<text x="183" y="647.7" font-size="14" fill="#1a1a1a">1.25</text>
<text x="183" y="669.4" font-size="14" fill="#1a1a1a">1.25</text>
<path d="M181.8 653.5H292" stroke="#000" stroke-width="1.1"/>
<path d="M242.5 650L265.2 656.6M242.5 656.6L265.2 650" stroke="#000" stroke-width="0.8"/>
<rect x="253.3" y="647.4" width="1" height="1" fill="#000"/>
<text x="0" y="0" font-size="14" fill="#1a1a1a" letter-spacing="-0.2" transform="translate(443 654) rotate(-25) scale(1 1.1)">60</text>
<circle cx="457.6" cy="638.2" r="1.5" fill="none" stroke="#444" stroke-width="0.7"/>
<rect x="442" y="671" width="1" height="1" fill="#000"/><rect x="448" y="671" width="1" height="1" fill="#000"/><rect x="445" y="675.2" width="1" height="1.6" fill="#000"/>
<path d="M628.2 634.4H641.8" stroke="#000" stroke-width="1.2"/>
<path d="M628.4 634.2L633.6 629.2M628.6 634.2L634.4 632.4" stroke="#000" stroke-width="0.8"/>
<text x="645" y="636.9" font-size="9.4" fill="#333">Xxx Yyy</text>
<text x="645" y="657.1" font-size="9.4" fill="#333">Xxxxx Yyyyy</text>
<text x="645" y="677.1" font-size="9.4" fill="#333">Xx Yy</text>
</svg>
</body></html>
